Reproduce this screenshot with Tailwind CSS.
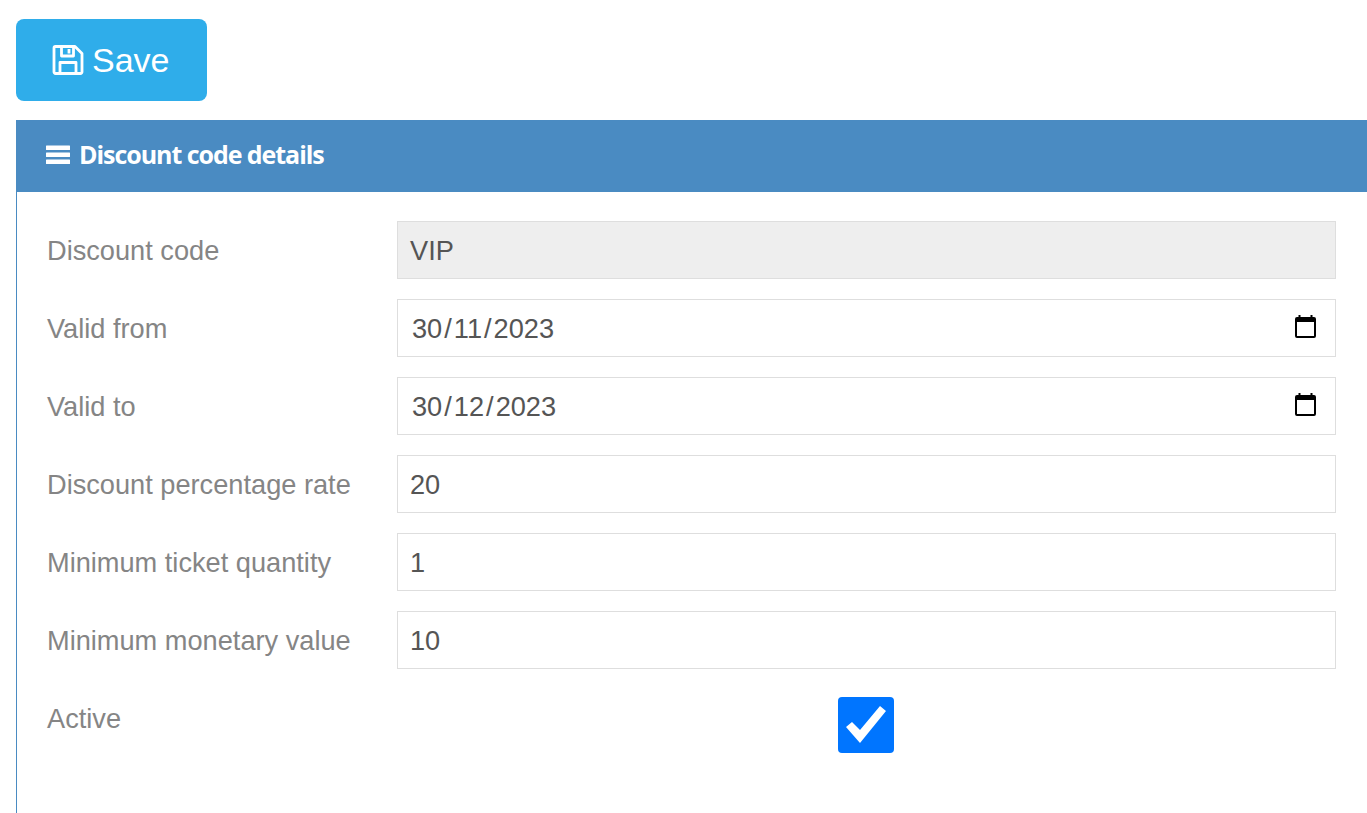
<!DOCTYPE html>
<html lang="en">

<head>
    <meta charset="UTF-8">
    <meta name="viewport" content="width=device-width, initial-scale=1.0">
    <title>Discount code details</title>
    <script src="https://cdn.jsdelivr.net/npm/@tailwindcss/browser@4"></script>
</head>

<body class="bg-white font-['Liberation_Sans',Arial,sans-serif] h-[813px] overflow-hidden">
    <div class="pl-4 pt-[19px]">
        <!-- Save button -->
        <button class="flex items-center w-[191px] h-[82px] pl-9 gap-2 bg-[#2fadea] text-white text-[34px] rounded-lg">
            <svg class="w-8 h-8" viewBox="0 0 32 32" fill="none" stroke="white" stroke-width="2.8" stroke-linejoin="round">
                <path d="M3.5 2.5H23L30 9.5V28A1.5 1.5 0 0 1 28.5 29.5H3.5A1.5 1.5 0 0 1 2 28V4A1.5 1.5 0 0 1 3.5 2.5Z" />
                <path d="M9.5 2.5V12H21.5V2.5" />
                <path d="M17 5V9.5" />
                <path d="M8 29.5V18.5H24V29.5" />
            </svg>
            <span>Save</span>
        </button>

        <!-- Panel -->
        <div class="mt-[19px] border-l border-[#4a8bc2] h-[693px]">
            <div class="flex items-center h-[72px] pl-[30px] gap-[9px] bg-[#4a8bc2] text-white -ml-px">
                <svg class="w-6 h-5 -mt-[3px]" viewBox="0 0 24 20" fill="white">
                    <rect x="0" y="0.5" width="24" height="4.5" rx="0.5" />
                    <rect x="0" y="7.5" width="24" height="4.5" rx="0.5" />
                    <rect x="0" y="14.5" width="24" height="4.5" rx="0.5" />
                </svg>
                <h1 class="font-['Open_Sans',sans-serif] font-bold text-[25px] tracking-[-1.05px] -mt-0.5">Discount code details</h1>
            </div>

            <div class="flex flex-col gap-5 pt-[29px] pl-[30px] pr-[31px] text-[27.2px]">
                <div class="flex items-center h-[58px]">
                    <label class="w-[350px] shrink-0 pt-0.5 text-[#858585]">Discount code</label>
                    <div class="flex-1 h-full flex items-center px-3 pt-0.5 border border-[#dedede] bg-[#eeeeee] text-[#555555]">VIP</div>
                </div>
                <div class="flex items-center h-[58px]">
                    <label class="w-[350px] shrink-0 pt-0.5 text-[#858585]">Valid from</label>
                    <div class="flex-1 h-full flex items-center justify-between pl-3.5 pr-[19px] pt-0.5 border border-[#dedede] text-[#555555]">
                        <span>30<span class="px-[2px]">/</span>11<span class="px-[2px]">/</span>2023</span>
                        <svg class="w-[21px] h-[23px] -mt-[5px]" viewBox="0 0 21 23" fill="black">
                            <path fill-rule="evenodd" d="M3.5 0H5.5V2H15.5V0H17.5V2H19A2 2 0 0 1 21 4V21A2 2 0 0 1 19 23H2A2 2 0 0 1 0 21V4A2 2 0 0 1 2 2H3.5ZM2 7V21H19V7Z" />
                        </svg>
                    </div>
                </div>
                <div class="flex items-center h-[58px]">
                    <label class="w-[350px] shrink-0 pt-0.5 text-[#858585]">Valid to</label>
                    <div class="flex-1 h-full flex items-center justify-between pl-3.5 pr-[19px] pt-0.5 border border-[#dedede] text-[#555555]">
                        <span>30<span class="px-[2px]">/</span>12<span class="px-[2px]">/</span>2023</span>
                        <svg class="w-[21px] h-[23px] -mt-[5px]" viewBox="0 0 21 23" fill="black">
                            <path fill-rule="evenodd" d="M3.5 0H5.5V2H15.5V0H17.5V2H19A2 2 0 0 1 21 4V21A2 2 0 0 1 19 23H2A2 2 0 0 1 0 21V4A2 2 0 0 1 2 2H3.5ZM2 7V21H19V7Z" />
                        </svg>
                    </div>
                </div>
                <div class="flex items-center h-[58px]">
                    <label class="w-[350px] shrink-0 pt-0.5 text-[#858585]">Discount percentage rate</label>
                    <div class="flex-1 h-full flex items-center px-3 pt-0.5 border border-[#dedede] text-[#555555]">20</div>
                </div>
                <div class="flex items-center h-[58px]">
                    <label class="w-[350px] shrink-0 pt-0.5 text-[#858585]">Minimum ticket quantity</label>
                    <div class="flex-1 h-full flex items-center px-3 pt-0.5 border border-[#dedede] text-[#555555]">1</div>
                </div>
                <div class="flex items-center h-[58px]">
                    <label class="w-[350px] shrink-0 pt-0.5 text-[#858585]">Minimum monetary value</label>
                    <div class="flex-1 h-full flex items-center px-3 pt-0.5 border border-[#dedede] text-[#555555]">10</div>
                </div>
                <div class="flex items-start h-[58px]">
                    <label class="w-[350px] shrink-0 h-[58px] pt-0.5 flex items-center text-[#858585]">Active</label>
                    <div class="flex-1 flex justify-center pt-2">
                        <svg class="w-14 h-14 -ml-px rounded bg-[#0075ff]" viewBox="0 0 56 56" fill="white">
                            <polygon points="8,30 14,25 22,33 42,9 48,14 22,46" />
                        </svg>
                    </div>
                </div>
            </div>
        </div>
    </div>
</body>

</html>
